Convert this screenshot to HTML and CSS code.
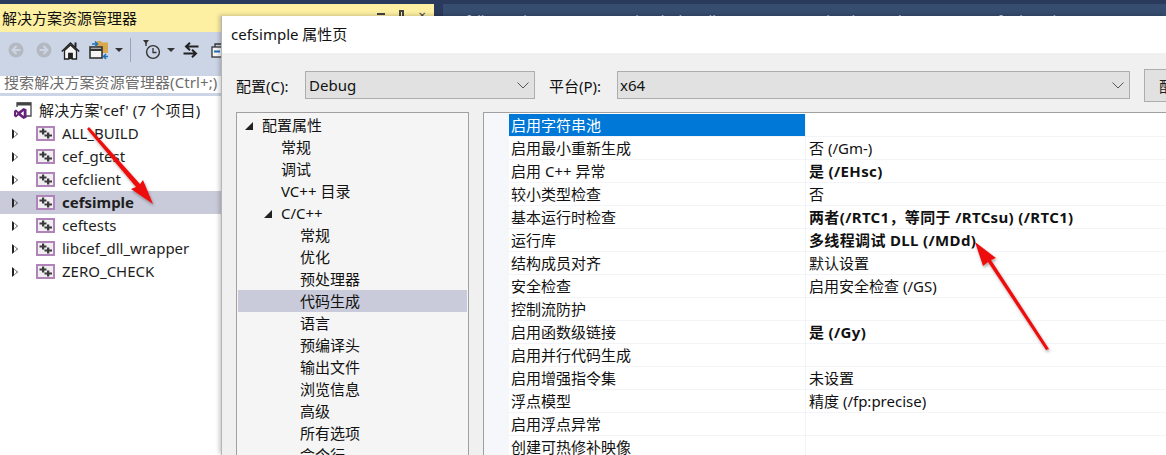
FILE: index.html
```html
<!DOCTYPE html>
<html lang="zh-CN">
<head>
<meta charset="utf-8">
<title>cefsimple 属性页</title>
<link rel="stylesheet" href="styles.css">
</head>
<body>
<svg class="defs" width="0" height="0"><defs><symbol id="proj" viewBox="0 0 19 15"><rect x="1" y="1" width="17" height="13" fill="#f1eef2" stroke="#b084b8" stroke-width="2"/><path d="M3.500 4.500h7v2h-7zM6 2.500h2.200v6H6zM8.500 8.500h7.500v2H8.500zM11 6.500h2.300v6H11z" fill="#3a3a3a"/></symbol></defs></svg>
<div class="ide">
  <aside class="explorer">
    <div class="explorer-title">解决方案资源管理器
      <div class="win-ctrls"><span class="wc-a"></span><span class="wc-b"></span><span class="wc-c">✕</span></div>
    </div>
    <div class="toolbar">
      <svg class="tb" width="16" height="16" viewBox="0 0 16 16"><circle cx="8" cy="8" r="7.500" fill="#b4b8c0"/><path d="M12.500 8H5M8.500 4 4.500 8l4 4" fill="none" stroke="#ccd5e6" stroke-width="2"/></svg>
      <svg class="tb tb-gap" width="16" height="16" viewBox="0 0 16 16"><circle cx="8" cy="8" r="7.500" fill="#b4b8c0"/><path d="M3.500 8H11M7.500 4l4 4-4 4" fill="none" stroke="#ccd5e6" stroke-width="2"/></svg>
      <svg class="tb home" width="19" height="19" viewBox="0 0 19 19"><path d="M.8 10.500 9.500 2l8.700 8.500" fill="none" stroke="#222" stroke-width="1.600"/><path d="M3.500 9.500V18h4.300v-5.500h3.400V18h4.300V9.500L9.500 4z" fill="#f5f5f5" stroke="#222" stroke-width="1.300"/><path d="M7.500 12h4v6h-4z" fill="#222"/><path d="M13.500 1.500h2v5h-2z" fill="#222"/></svg>
      <svg class="tb sync" width="20" height="20" viewBox="0 0 20 20"><path d="M8 1h4l1 1.500h6V13H8z" fill="#d8a84e"/><rect x="1" y="7" width="12" height="11" fill="#f5f5f5" stroke="#333" stroke-width="1.600"/><path d="M1 9.800h12" stroke="#333" stroke-width="2.400"/><path d="M3 4h5M6 1.500 8.500 4 6 6.500" fill="none" stroke="#1c6fb8" stroke-width="1.500"/><path d="M19 16.500h-4M17 14 14.500 16.500 17 19" fill="none" stroke="#1c6fb8" stroke-width="1.500"/></svg>
      <span class="caret caret-sync"></span>
      <span class="tb-sep"></span>
      <svg class="tb clock" width="20" height="20" viewBox="0 0 20 20"><path d="M1 0h6L4 4z" fill="#333"/><path d="M3.300 3h1.400v3H3.300z" fill="#333"/><circle cx="11" cy="12" r="6.400" fill="none" stroke="#333" stroke-width="1.400"/><path d="M11 8v4.500h3.500" fill="none" stroke="#333" stroke-width="1.300"/></svg>
      <span class="caret caret-clock"></span>
      <svg class="tb swap" width="16" height="16" viewBox="0 0 16 16"><path d="M15.500 4.500H3M7 .8 3 4.500 7 8.200M.5 11.500H13M9 7.800l4 3.700-4 3.700" fill="none" stroke="#222" stroke-width="2"/></svg>
      <svg class="tb copy" width="16" height="16" viewBox="0 0 16 16"><rect x="1" y="5" width="10" height="10" fill="#f5f5f5" stroke="#333" stroke-width="1.300"/><path d="M3 8.500h6v2H3z" fill="#1c6fb8"/><path d="M4 5V2h10v9h-3" fill="none" stroke="#333" stroke-width="1.300"/></svg>
    </div>
    <div class="search">搜索解决方案资源管理器(Ctrl+;)</div>
    <ul class="sol-tree">
      <li class="sol-root">
        <svg class="vs-icon" width="18" height="17" viewBox="0 0 18 17"><path d="M3 5V1h14v13h-5" fill="none" stroke="#444" stroke-width="1.300"/><path d="M3 .5h14v3H3z" fill="#444"/><path d="M0 9 2 7.500 4.500 9.700 9.500 6l3 1.300v8.400l-3 1.300-5-3.700L2 15.500 0 14zM2 10v3l1.500-1.500zM9.700 9 6.700 11.500l3 2.500z" fill="#68217a" fill-rule="evenodd"/></svg>
        <span>解决方案'cef' (7 个项目)</span>
      </li>
      <li class="proj"><span class="tri"></span><svg class="proj-icon"><use href="#proj"/></svg><span>ALL_BUILD</span></li>
      <li class="proj"><span class="tri"></span><svg class="proj-icon"><use href="#proj"/></svg><span>cef_gtest</span></li>
      <li class="proj"><span class="tri"></span><svg class="proj-icon"><use href="#proj"/></svg><span>cefclient</span></li>
      <li class="proj active"><span class="tri"></span><svg class="proj-icon"><use href="#proj"/></svg><span>cefsimple</span></li>
      <li class="proj"><span class="tri"></span><svg class="proj-icon"><use href="#proj"/></svg><span>ceftests</span></li>
      <li class="proj"><span class="tri"></span><svg class="proj-icon"><use href="#proj"/></svg><span>libcef_dll_wrapper</span></li>
      <li class="proj"><span class="tri"></span><svg class="proj-icon"><use href="#proj"/></svg><span>ZERO_CHECK</span></li>
    </ul>
  </aside>
  <div class="tabs">
    <span class="tab t1">cefclient_win.cc</span>
    <span class="tab t2">simple_handler.cc</span>
    <span class="tab t3">simple_app.h</span>
    <span class="tab t4">cef_winmain.cpp</span>
  </div>
</div>

<section class="dialog">
  <header class="dlg-title">cefsimple 属性页</header>
  <div class="dlg-body">
    <div class="cfg-row">
      <label class="cfg-label">配置(C):</label>
      <div class="select sel-config"><span>Debug</span><svg width="12" height="7" viewBox="0 0 12 7"><path d="M.5.500 6 6 11.500.500" fill="none" stroke="#555"/></svg></div>
      <label class="cfg-label plat-label">平台(P):</label>
      <div class="select sel-platform"><span>x64</span><svg width="12" height="7" viewBox="0 0 12 7"><path d="M.5.500 6 6 11.500.500" fill="none" stroke="#555"/></svg></div>
      <button class="mgr-btn">配置管理器(O)...</button>
    </div>
    <div class="panes">
      <ul class="prop-tree">
        <li class="lv0"><span class="open-tri"></span>配置属性</li>
        <li class="lv1">常规</li>
        <li class="lv1">调试</li>
        <li class="lv1">VC++ 目录</li>
        <li class="lv1"><span class="open-tri"></span>C/C++</li>
        <li class="lv2">常规</li>
        <li class="lv2">优化</li>
        <li class="lv2">预处理器</li>
        <li class="lv2 selected">代码生成</li>
        <li class="lv2">语言</li>
        <li class="lv2">预编译头</li>
        <li class="lv2">输出文件</li>
        <li class="lv2">浏览信息</li>
        <li class="lv2">高级</li>
        <li class="lv2">所有选项</li>
        <li class="lv2">命令行</li>
      </ul>
      <div class="grid">
        <div class="row sel"><div class="k">启用字符串池</div><div class="v"></div></div>
        <div class="row"><div class="k">启用最小重新生成</div><div class="v">否 (/Gm-)</div></div>
        <div class="row"><div class="k">启用 C++ 异常</div><div class="v b">是 (/EHsc)</div></div>
        <div class="row"><div class="k">较小类型检查</div><div class="v">否</div></div>
        <div class="row"><div class="k">基本运行时检查</div><div class="v b">两者(/RTC1，等同于 /RTCsu) (/RTC1)</div></div>
        <div class="row"><div class="k">运行库</div><div class="v b">多线程调试 DLL (/MDd)</div></div>
        <div class="row"><div class="k">结构成员对齐</div><div class="v">默认设置</div></div>
        <div class="row"><div class="k">安全检查</div><div class="v">启用安全检查 (/GS)</div></div>
        <div class="row"><div class="k">控制流防护</div><div class="v"></div></div>
        <div class="row"><div class="k">启用函数级链接</div><div class="v b">是 (/Gy)</div></div>
        <div class="row"><div class="k">启用并行代码生成</div><div class="v"></div></div>
        <div class="row"><div class="k">启用增强指令集</div><div class="v">未设置</div></div>
        <div class="row"><div class="k">浮点模型</div><div class="v">精度 (/fp:precise)</div></div>
        <div class="row"><div class="k">启用浮点异常</div><div class="v"></div></div>
        <div class="row"><div class="k">创建可热修补映像</div><div class="v"></div></div>
      </div>
    </div>
  </div>
</section>

<svg class="arrows" width="1166" height="455" viewBox="0 0 1166 455">
  <defs><filter id="sh" x="-20%" y="-20%" width="140%" height="140%"><feDropShadow dx="1" dy="2" stdDeviation="1.500" flood-color="#000" flood-opacity=".35"/></filter></defs>
  <g fill="#ee1111" filter="url(#sh)">
    <path d="M87 129 89 127 140 184 143 180 153 204 131 189 136 187z"/>
    <path d="M1049 349 1046 350 988 262 983 266 975 242 996 258 991 260z"/>
  </g>
</svg>
</body>
</html>
```
FILE: styles.css
```css
* { box-sizing: border-box; }
html, body { margin: 0; padding: 0; }
body {
  width: 1166px; height: 455px; overflow: hidden; position: relative;
  font-family: "Noto Sans", "Noto Sans CJK SC", sans-serif;
  font-size: 15px; color: #1e1e1e; background: #2a3a5c;
}
ul { list-style: none; margin: 0; padding: 0; }
.defs { position: absolute; }
.ide { display: flex; height: 455px; padding-top: 4px; }

.explorer { width: 434px; height: 451px; background: #fff; flex: none; }
.explorer-title {
  height: 28px; background: #fdf0a3; line-height: 28px; padding-left: 2px; color: #111;
  display: flex; justify-content: space-between;
}
.win-ctrls { display: flex; gap: 14px; padding: 6px 8px 0 0; height: 12px; }
.wc-a { width: 8px; height: 2px; margin-top: 3px; background: #444; }
.wc-b { width: 5px; height: 8px; border: 2px solid #444; }
.wc-c { font-size: 10px; line-height: 10px; color: #444; }

.toolbar { height: 44px; background: #ccd5e6; display: flex; align-items: center; padding: 0 0 8px 8px; }
.tb { flex: none; }
.tb-gap { margin-left: 12px; }
.home { margin-left: 9px; }
.sync { margin-left: 9px; }
.caret { width: 0; height: 0; border: 4px solid transparent; border-top: 4px solid #333; border-bottom: 0; flex: none; }
.caret-sync { margin-left: 6px; }
.tb-sep { width: 1px; height: 24px; background: #9aa3b5; margin-left: 7px; }
.clock { margin-left: 11px; }
.caret-clock { margin-left: 5px; }
.swap { margin-left: 8px; }
.copy { margin-left: 12px; }

.search { height: 17px; background: #fff; color: #6d6d6d; line-height: 13px; padding-left: 4px; white-space: nowrap; overflow: hidden; letter-spacing: .1px; }
.sol-tree { border-top: 3px solid #ccd5e6; padding-top: 3px; width: 222px; height: 363px; border-right: 1px solid #ccd5e6; }
.sol-root { height: 23px; display: flex; align-items: center; padding-left: 14px; gap: 7px; line-height: 23px; letter-spacing: .15px; }
.proj { height: 23px; display: flex; align-items: center; line-height: 23px; position: relative; padding-left: 12px; white-space: nowrap; }
.proj.active { background: #c9cbda; font-weight: 700; }
.tri { width: 0; height: 0; border-left: 6px solid #222; border-top: 5.500px solid transparent; border-bottom: 5.500px solid transparent; position: relative; }
.tri::after { content: ""; position: absolute; left: -4.500px; top: -3px; border-left: 3px solid #fff; border-top: 3px solid transparent; border-bottom: 3px solid transparent; }
.active .tri::after { border-left-color: #c9cbda; }
.proj-icon { margin-left: 18px; width: 19px; height: 15px; flex: none; }
.proj-icon + span { margin-left: 7px; }

.tabs { flex: 1; height: 12px; background: #364d6f; margin-left: 9px; overflow: hidden; position: relative; color: #c3cbd9; font-size: 14px; line-height: 20px; display: flex; }
.tab { white-space: nowrap; flex: none; padding-top: 7px; }
.t1 { margin-left: 8px; }
.t2 { margin-left: 76px; }
.t3 { margin-left: 75px; }
.t4 { margin-left: 76px; }

.dialog { position: absolute; left: 221px; top: 16px; width: 945px; height: 439px; border-left: 1px solid #b5b5b5; background: #f0f0f0; box-shadow: -2px -1px 4px rgba(0,0,0,.2); color: #111; }
.dlg-title { height: 37px; background: #fff; line-height: 36px; padding-left: 9px; }
.dlg-body { padding: 16px 0 0 14px; }
.cfg-row { display: flex; align-items: center; height: 32px; }
.cfg-label { width: 69px; flex: none; }
.plat-label { margin-left: 14px; width: 68px; }
.select { height: 28px; background: #e1e1e1; border: 1px solid #adadad; display: flex; align-items: center; justify-content: space-between; padding: 0 5px 0 3px; flex: none; }
.sel-config { width: 230px; }
.sel-platform { width: 513px; padding-left: 2px; }
.mgr-btn { margin-left: 14px; width: 160px; height: 33px; background: #e1e1e1; border: 1px solid #adadad; font: inherit; color: #1e1e1e; padding: 0 0 0 14px; text-align: left; flex: none; white-space: nowrap; overflow: hidden; }
.panes { display: flex; gap: 14px; margin-top: 11px; }

.prop-tree { width: 233px; height: 345px; flex: none; background: #f5f5f5; border: 1px solid #a0a0a0; padding: 1px; }
.prop-tree li { height: 22px; line-height: 22px; white-space: nowrap; position: relative; }
.lv0 { padding-left: 24px; }
.lv1 { padding-left: 43px; }
.lv2 { padding-left: 62px; }
.selected { background: #c9cbda; }
.open-tri { position: absolute; margin-left: -17px; margin-top: 8px; width: 0; height: 0; border-bottom: 8px solid #222; border-left: 8px solid transparent; }

.grid { flex: 1; height: 345px; background: #fff; border: 1px solid #a0a0a0; border-right: 0; padding: 1px 0 0 25px; overflow: hidden; background-image: linear-gradient(#f5f7fb, #f5f7fb); background-repeat: no-repeat; background-size: 25px 100%; }
.row { height: 23px; display: flex; line-height: 22px; border-bottom: 1px solid #f3f4f8; white-space: nowrap; }
.k { width: 297px; padding-left: 2px; flex: none; border-right: 1px solid #f3f4f8; overflow: hidden; }
.v { padding-left: 3px; flex: 1; }
.b { font-weight: 700; letter-spacing: .35px; }
.sel .k { background: #0078d7; color: #fff; }

.arrows { position: absolute; left: 0; top: 0; pointer-events: none; }
```
